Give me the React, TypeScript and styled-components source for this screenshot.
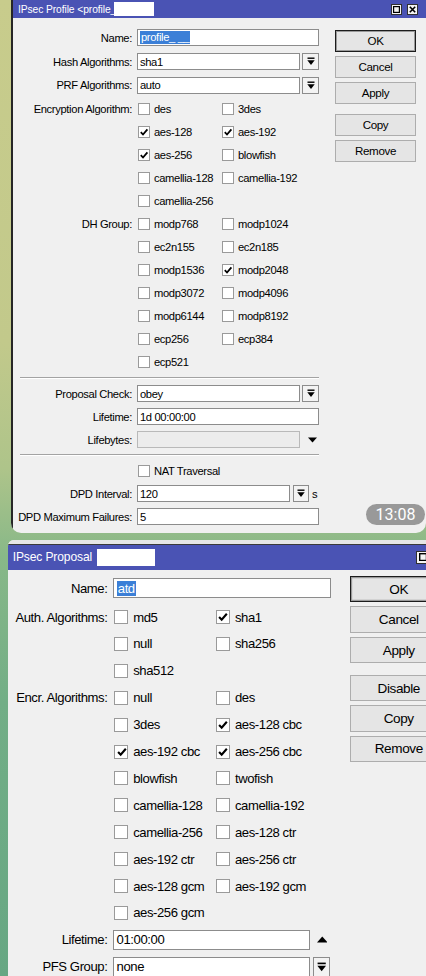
import React from "react";
import styled, { createGlobalStyle } from "styled-components";

const GlobalStyle = createGlobalStyle`
  html, body { margin: 0; padding: 0; }
  body {
    width: 426px;
    height: 976px;
    overflow: hidden;
    background: linear-gradient(180deg, #c8cc8c 0%, #c2c98b 35%, #aec48a 48%, #88b888 57%, #72ae86 72%, #67a783 100%);
    font-family: "Liberation Sans", Arial, sans-serif;
  }
`;

const Page = styled.div`
  display: flex;
  flex-direction: column;
  gap: 7px;
  height: 976px;
  overflow: hidden;
`;

const Bubble = styled.div<{ $left: number; $radius: string }>`
  position: relative;
  flex: none;
  margin-left: ${(p) => p.$left}px;
  width: ${(p) => 426 - p.$left}px;
  overflow: hidden;
  border-radius: ${(p) => p.$radius};
`;

const Window = styled.div<{ $zoom: number; $w: number; $edge: boolean }>`
  zoom: ${(p) => p.$zoom};
  width: ${(p) => p.$w}px;
  box-sizing: border-box;
  background: #f0f0f0;
  border-left: ${(p) => (p.$edge ? "2px solid #262626" : "none")};
  font-size: 11.2px;
  letter-spacing: -0.35px;
  color: #000;
`;

const TopBand = styled.div`
  height: 3px;
  background: #e6e6e6;
  border-bottom: 1.5px solid #3a3a3a;
`;

const TitleBar = styled.div<{ $h: number; $pl: number }>`
  height: ${(p) => p.$h}px;
  background: #4a53b4;
  color: #fff;
  display: flex;
  align-items: center;
  padding: 0 8px 0 ${(p) => p.$pl}px;
  font-size: 10.3px;
  letter-spacing: -0.1px;
  white-space: nowrap;
`;

const Redact = styled.span<{ $w: number; $h: number; $ml: number }>`
  display: inline-block;
  width: ${(p) => p.$w}px;
  height: ${(p) => p.$h}px;
  margin-left: ${(p) => p.$ml}px;
  background: #fff;
`;

const TitleBtns = styled.div`
  margin-left: auto;
  display: flex;
  gap: 5px;
`;

const TitleBtn = styled.span`
  width: 11px;
  height: 11px;
  box-sizing: border-box;
  background: #f4f4f4;
  border: 1px solid #303030;
  display: flex;
  align-items: center;
  justify-content: center;
`;

const Body = styled.div`
  display: flex;
  align-items: flex-start;
`;

const Form = styled.div<{ $pt: number; $pb: number }>`
  display: flex;
  flex-direction: column;
  padding-top: ${(p) => p.$pt}px;
  padding-bottom: ${(p) => p.$pb}px;
`;

const Row = styled.div<{ $h: number; $lw: number }>`
  display: grid;
  grid-template-columns: ${(p) => p.$lw}px max-content;
  column-gap: 5px;
  align-items: center;
  height: ${(p) => p.$h}px;
`;

const Label = styled.span`
  text-align: right;
  white-space: nowrap;
`;

const Field = styled.div<{ $ml?: number }>`
  display: flex;
  align-items: center;
  margin-left: ${(p) => p.$ml ?? 0}px;
  white-space: nowrap;
`;

const Input = styled.div<{ $w: number; $disabled?: boolean }>`
  box-sizing: border-box;
  width: ${(p) => p.$w}px;
  height: 17px;
  border: 1px solid ${(p) => (p.$disabled ? "#b9b9b9" : "#8c8c8c")};
  background: ${(p) => (p.$disabled ? "#ececec" : "#fff")};
  padding-left: 2px;
  display: flex;
  align-items: center;
  white-space: nowrap;
  overflow: hidden;
`;

const Sel = styled.span`
  background: #3b7fd7;
  color: #fff;
  padding: 0 1px;
  line-height: 13px;
`;

const DropBtn = styled.div<{ $w: number; $ml: number }>`
  box-sizing: border-box;
  width: ${(p) => p.$w}px;
  height: 17px;
  margin-left: ${(p) => p.$ml}px;
  border: 1px solid #8c8c8c;
  background: #f3f3f3;
  display: flex;
  align-items: center;
  justify-content: center;
`;

const Arrow = styled.span<{ $ml: number }>`
  display: inline-flex;
  margin-left: ${(p) => p.$ml}px;
`;

const Unit = styled.span`
  margin-left: 3px;
`;

const CheckItem = styled.div<{ $w?: number }>`
  display: flex;
  align-items: center;
  gap: 4px;
  width: ${(p) => (p.$w ? `${p.$w}px` : "auto")};
`;

const Box = styled.span`
  width: 12px;
  height: 12px;
  box-sizing: border-box;
  border: 1px solid #9a9a9a;
  background: #fff;
  display: inline-flex;
  align-items: center;
  justify-content: center;
  flex: none;
`;

const Sep = styled.div<{ $h: number; $inset: number }>`
  height: ${(p) => p.$h}px;
  display: flex;
  align-items: center;
  padding-left: ${(p) => p.$inset}px;
`;

const SepLine = styled.div<{ $w: number }>`
  width: ${(p) => p.$w}px;
  border-top: 1px solid #a3a3a3;
  border-bottom: 1px solid #ffffff;
`;

const ButtonCol = styled.div<{ $pt: number }>`
  display: flex;
  flex-direction: column;
  gap: 3.5px;
  margin-left: 16px;
  padding-top: ${(p) => p.$pt}px;
`;

const Btn = styled.div<{ $w: number; $default?: boolean; $extra?: number }>`
  box-sizing: border-box;
  width: ${(p) => p.$w}px;
  height: 22.5px;
  margin-top: ${(p) => p.$extra ?? 0}px;
  background: #e5e5e5;
  border: 1px solid ${(p) => (p.$default ? "#1c1c1c" : "#adadad")};
  box-shadow: ${(p) => (p.$default ? "inset 0 0 0 1px #9a9a9a" : "none")};
  display: flex;
  align-items: center;
  justify-content: center;
  font-size: 11.6px;
`;

const Stamp = styled.div`
  position: absolute;
  right: 1px;
  bottom: 8px;
  width: 59px;
  height: 21px;
  border-radius: 11px;
  background: #999999;
  color: #fff;
  font-family: Roboto, "Liberation Sans", sans-serif;
  font-size: 16px;
  display: flex;
  align-items: center;
  justify-content: center;
`;

const CheckMark = () => (
  <svg width="10" height="10" viewBox="0 0 10 10">
    <path d="M1.8 5.2 L4 7.5 L8.4 2.4" fill="none" stroke="#000" strokeWidth="1.8" />
  </svg>
);

const DropIcon = () => (
  <svg width="8" height="9" viewBox="0 0 8 9">
    <rect x="0.5" y="0.5" width="7" height="1.4" fill="#000" />
    <path d="M0.3 3.2 H7.7 L4 8 Z" fill="#000" />
  </svg>
);

const TriDown = () => (
  <svg width="9" height="6" viewBox="0 0 9 6">
    <path d="M0 0.5 H9 L4.5 5.5 Z" fill="#000" />
  </svg>
);

const TriUp = () => (
  <svg width="9" height="6" viewBox="0 0 9 6">
    <path d="M0 5.5 H9 L4.5 0.5 Z" fill="#000" />
  </svg>
);

const MaxIcon = () => (
  <svg width="7" height="7" viewBox="0 0 7 7">
    <rect x="0.6" y="0.6" width="5.8" height="5.8" fill="none" stroke="#000" strokeWidth="1.2" />
  </svg>
);

const CloseIcon = () => (
  <svg width="7" height="7" viewBox="0 0 7 7">
    <path d="M0.8 0.8 L6.2 6.2 M6.2 0.8 L0.8 6.2" stroke="#000" strokeWidth="1.6" />
  </svg>
);

type Item = [string, boolean];

const CheckPair = ({ items, colW }: { items: Item[]; colW: number }) => (
  <Field $ml={1}>
    {items.map(([t, c], i) => (
      <CheckItem key={t} $w={i === 0 && items.length > 1 ? colW : undefined}>
        <Box>{c && <CheckMark />}</Box>
        <span>{t}</span>
      </CheckItem>
    ))}
  </Field>
);

const encRows: Item[][] = [
  [["des", false], ["3des", false]],
  [["aes-128", true], ["aes-192", true]],
  [["aes-256", true], ["blowfish", false]],
  [["camellia-128", false], ["camellia-192", false]],
  [["camellia-256", false]],
];

const dhRows: Item[][] = [
  [["modp768", false], ["modp1024", false]],
  [["ec2n155", false], ["ec2n185", false]],
  [["modp1536", false], ["modp2048", true]],
  [["modp3072", false], ["modp4096", false]],
  [["modp6144", false], ["modp8192", false]],
  [["ecp256", false], ["ecp384", false]],
  [["ecp521", false]],
];

const authRows: Item[][] = [
  [["md5", false], ["sha1", true]],
  [["null", false], ["sha256", false]],
  [["sha512", false]],
];

const encrRows: Item[][] = [
  [["null", false], ["des", false]],
  [["3des", false], ["aes-128 cbc", true]],
  [["aes-192 cbc", true], ["aes-256 cbc", true]],
  [["blowfish", false], ["twofish", false]],
  [["camellia-128", false], ["camellia-192", false]],
  [["camellia-256", false], ["aes-128 ctr", false]],
  [["aes-192 ctr", false], ["aes-256 ctr", false]],
  [["aes-128 gcm", false], ["aes-192 gcm", false]],
  [["aes-256 gcm", false]],
];

const ProfileDialog = () => {
  const lw = 119;
  return (
    <Window $zoom={1} $w={415} $edge>
      <TitleBar $h={18} $pl={5}>
        <span>IPsec Profile &lt;profile_</span>
        <Redact $w={40} $h={14} $ml={-2} />
        <TitleBtns>
          <TitleBtn><MaxIcon /></TitleBtn>
          <TitleBtn><CloseIcon /></TitleBtn>
        </TitleBtns>
      </TitleBar>
      <Body>
        <Form $pt={7} $pb={5}>
          <Row $h={25} $lw={lw}>
            <Label>Name:</Label>
            <Field>
              <Input $w={182}><Sel>profile_ __</Sel></Input>
            </Field>
          </Row>
          <Row $h={23} $lw={lw}>
            <Label>Hash Algorithms:</Label>
            <Field>
              <Input $w={163}>sha1</Input>
              <DropBtn $w={17} $ml={2}><DropIcon /></DropBtn>
            </Field>
          </Row>
          <Row $h={24} $lw={lw}>
            <Label>PRF Algorithms:</Label>
            <Field>
              <Input $w={163}>auto</Input>
              <DropBtn $w={17} $ml={2}><DropIcon /></DropBtn>
            </Field>
          </Row>
          {encRows.map((r, i) => (
            <Row key={"e" + i} $h={23} $lw={lw}>
              <Label>{i === 0 ? "Encryption Algorithm:" : ""}</Label>
              <CheckPair items={r} colW={84} />
            </Row>
          ))}
          {dhRows.map((r, i) => (
            <Row key={"d" + i} $h={23} $lw={lw}>
              <Label>{i === 0 ? "DH Group:" : ""}</Label>
              <CheckPair items={r} colW={84} />
            </Row>
          ))}
          <Sep $h={9} $inset={7}><SepLine $w={299} /></Sep>
          <Row $h={23} $lw={lw}>
            <Label>Proposal Check:</Label>
            <Field>
              <Input $w={163}>obey</Input>
              <DropBtn $w={17} $ml={2}><DropIcon /></DropBtn>
            </Field>
          </Row>
          <Row $h={23} $lw={lw}>
            <Label>Lifetime:</Label>
            <Field>
              <Input $w={182}>1d 00:00:00</Input>
            </Field>
          </Row>
          <Row $h={23} $lw={lw}>
            <Label>Lifebytes:</Label>
            <Field>
              <Input $w={163} $disabled />
              <Arrow $ml={8}><TriDown /></Arrow>
            </Field>
          </Row>
          <Sep $h={8} $inset={7}><SepLine $w={299} /></Sep>
          <Row $h={23} $lw={lw}>
            <Label />
            <CheckPair items={[["NAT Traversal", false]]} colW={84} />
          </Row>
          <Row $h={23} $lw={lw}>
            <Label>DPD Interval:</Label>
            <Field>
              <Input $w={153}>120</Input>
              <DropBtn $w={16} $ml={3}><DropIcon /></DropBtn>
              <Unit>s</Unit>
            </Field>
          </Row>
          <Row $h={23} $lw={lw}>
            <Label>DPD Maximum Failures:</Label>
            <Field>
              <Input $w={182}>5</Input>
            </Field>
          </Row>
        </Form>
        <ButtonCol $pt={11.5}>
          <Btn $w={81} $default>OK</Btn>
          <Btn $w={81}>Cancel</Btn>
          <Btn $w={81}>Apply</Btn>
          <Btn $w={81} $extra={6}>Copy</Btn>
          <Btn $w={81}>Remove</Btn>
        </ButtonCol>
      </Body>
    </Window>
  );
};

const ProposalDialog = () => {
  const lw = 85;
  return (
    <Window $zoom={1.17} $w={384} $edge={false}>
      <TopBand />
      <TitleBar $h={22} $pl={4}>
        <span>IPsec Proposal</span>
        <Redact $w={50} $h={15} $ml={4} />
        <TitleBtns>
          <TitleBtn><MaxIcon /></TitleBtn>
          <TitleBtn><CloseIcon /></TitleBtn>
        </TitleBtns>
      </TitleBar>
      <Body>
        <Form $pt={2.5} $pb={4}>
          <Row $h={26} $lw={lw}>
            <Label>Name:</Label>
            <Field>
              <Input $w={186}><Sel>atd</Sel></Input>
            </Field>
          </Row>
          {authRows.map((r, i) => (
            <Row key={"a" + i} $h={23} $lw={lw}>
              <Label>{i === 0 ? "Auth. Algorithms:" : ""}</Label>
              <CheckPair items={r} colW={87} />
            </Row>
          ))}
          {encrRows.map((r, i) => (
            <Row key={"c" + i} $h={23} $lw={lw}>
              <Label>{i === 0 ? "Encr. Algorithms:" : ""}</Label>
              <CheckPair items={r} colW={87} />
            </Row>
          ))}
          <Row $h={23} $lw={lw}>
            <Label>Lifetime:</Label>
            <Field>
              <Input $w={168}>01:00:00</Input>
              <Arrow $ml={6}><TriUp /></Arrow>
            </Field>
          </Row>
          <Row $h={23} $lw={lw}>
            <Label>PFS Group:</Label>
            <Field>
              <Input $w={168}>none</Input>
              <DropBtn $w={15} $ml={2.5}><DropIcon /></DropBtn>
            </Field>
          </Row>
        </Form>
        <ButtonCol $pt={5}>
          <Btn $w={84} $default>OK</Btn>
          <Btn $w={84}>Cancel</Btn>
          <Btn $w={84}>Apply</Btn>
          <Btn $w={84} $extra={6.5}>Disable</Btn>
          <Btn $w={84}>Copy</Btn>
          <Btn $w={84}>Remove</Btn>
        </ButtonCol>
      </Body>
    </Window>
  );
};

export default function App() {
  return (
    <>
      <GlobalStyle />
      <Page>
        <Bubble $left={11} $radius="0 0 10px 10px">
          <ProfileDialog />
          <Stamp>13:08</Stamp>
        </Bubble>
        <Bubble $left={8} $radius="6px 0 0 0">
          <ProposalDialog />
        </Bubble>
      </Page>
    </>
  );
}
